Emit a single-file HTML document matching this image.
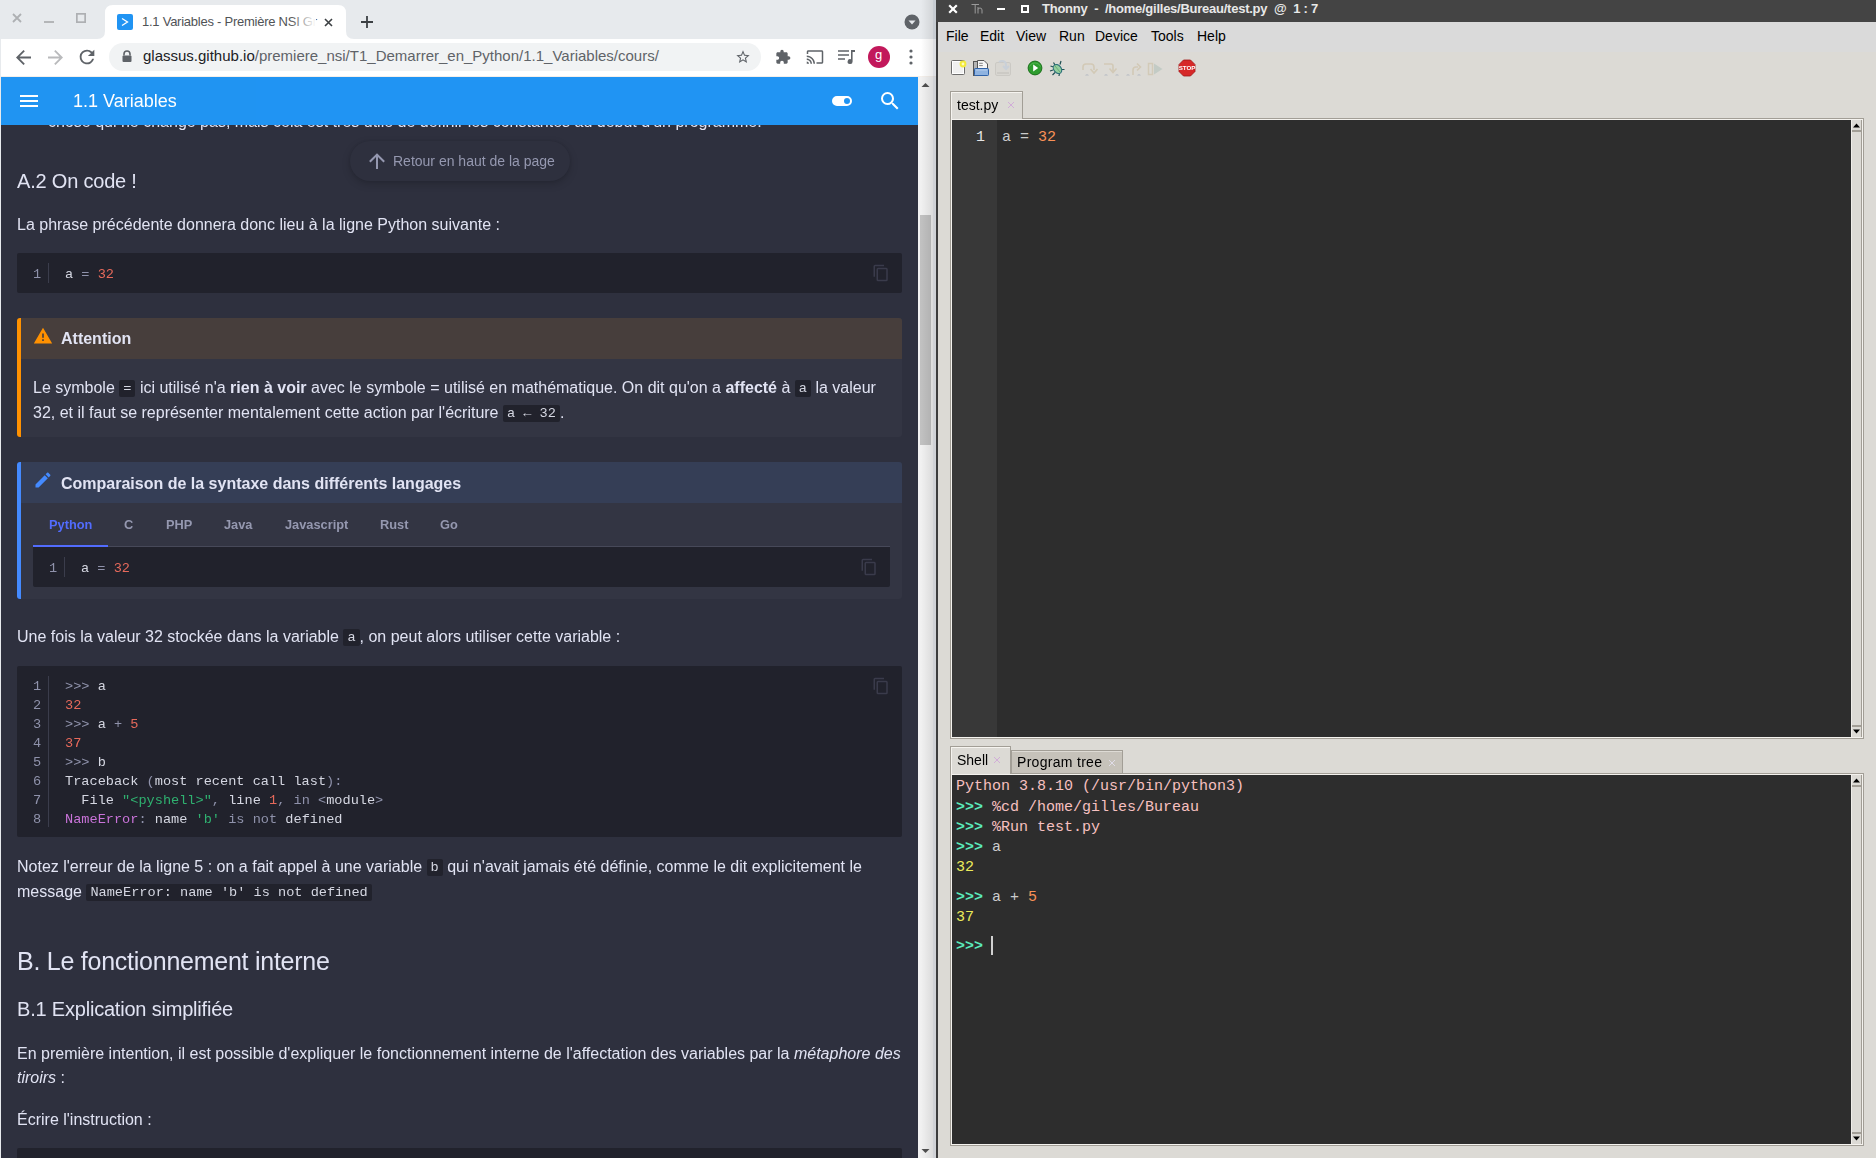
<!DOCTYPE html>
<html><head><meta charset="utf-8"><title>screen</title>
<style>
*{margin:0;padding:0;box-sizing:border-box}
html,body{width:1876px;height:1158px;overflow:hidden;background:#dcdad5;font-family:"Liberation Sans",sans-serif;position:relative}
.a{position:absolute}
.t{position:absolute;line-height:0;white-space:nowrap}
.mono{font-family:"Liberation Mono",monospace}
svg{display:block}
/* chrome */
#chrome{left:0;top:0;width:936px;height:1158px;background:#e7eaed;overflow:hidden}
#web{left:1px;top:77px;width:917px;height:1081px;background:#2e303e;overflow:hidden;will-change:transform;opacity:0.999}
.fg{color:#e1e3f3}
.lt{color:#9598b0}
code,.code{font-family:"Liberation Mono",monospace;font-size:13.6px;background:#21222c;color:#d5d7e2;border-radius:2px;padding:1px 4px;position:relative;top:-1px}
.num{color:#e6695b}.str{color:#2fb170}.fn{color:#c973d9}.op{color:#8f92ab}
/* thonny */
#thonny{left:936px;top:0;width:940px;height:1158px;background:#dcdad5;border-left:2px solid #3c3c3c}
</style></head><body>
<div id="chrome" class="a">
  <!-- window controls -->
  <svg class="a" style="left:12px;top:13px" width="10" height="10" viewBox="0 0 10 10"><path d="M1 1L9 9M9 1L1 9" stroke="#aeb0b3" stroke-width="1.8"/></svg>
  <svg class="a" style="left:44px;top:13px" width="10" height="10" viewBox="0 0 10 10"><path d="M0 9H10" stroke="#aeb0b3" stroke-width="1.8"/></svg>
  <svg class="a" style="left:76px;top:13px" width="10" height="10" viewBox="0 0 10 10"><rect x="0.8" y="0.8" width="8.4" height="8.4" fill="none" stroke="#aeb0b3" stroke-width="1.8"/></svg>
  <!-- active tab -->
  <svg class="a" style="left:97px;top:5px" width="257" height="34" viewBox="0 0 257 34"><path d="M0 34 Q8 34 8 26 V8 Q8 0 16 0 H241 Q249 0 249 8 V26 Q249 34 257 34 Z" fill="#fff"/></svg>
  <div class="a" style="left:117px;top:14px;width:16px;height:16px;background:#2094f3;border-radius:2px"></div>
  <svg class="a" style="left:117px;top:14px" width="16" height="16" viewBox="0 0 16 16"><path d="M5 4.5L10.5 8L5 11.5" fill="none" stroke="#fff" stroke-width="1.3"/></svg>
  <div class="a" style="left:142px;top:12px;width:176px;height:20px;overflow:hidden"><div class="t" style="left:0;top:10px;font-size:13px;color:#505356;letter-spacing:-0.25px">1.1 Variables - Première NSI Gr</div></div>
  <div class="a" style="left:290px;top:12px;width:26px;height:20px;background:linear-gradient(90deg,rgba(255,255,255,0),#fff)"></div>
  <svg class="a" style="left:324px;top:18px" width="9" height="9" viewBox="0 0 9 9"><path d="M1 1L8 8M8 1L1 8" stroke="#3c4043" stroke-width="1.6"/></svg>
  <svg class="a" style="left:361px;top:16px" width="12" height="12" viewBox="0 0 12 12"><path d="M6 0V12M0 6H12" stroke="#3c4043" stroke-width="1.8"/></svg>
  <svg class="a" style="left:904px;top:14px" width="16" height="16" viewBox="0 0 16 16"><circle cx="8" cy="8" r="7.5" fill="#5f6368"/><path d="M4.5 6.5H11.5L8 10.5Z" fill="#e7eaed"/></svg>
  <!-- toolbar -->
  <div class="a" style="left:1px;top:39px;width:935px;height:37px;background:#fff"></div>
  <div class="a" style="left:1px;top:76px;width:935px;height:1px;background:#f4efea"></div>
  <svg class="a" style="left:16px;top:50px" width="15" height="15" viewBox="0 0 16 16"><path d="M16 7H3.83l5.59-5.59L8 0 0 8l8 8 1.41-1.41L3.83 9H16z" fill="#5f6368"/></svg>
  <svg class="a" style="left:48px;top:50px" width="15" height="15" viewBox="0 0 16 16"><path d="M0 7h12.17L6.58 1.41 8 0l8 8-8 8-1.41-1.41L12.17 9H0z" fill="#b9babc"/></svg>
  <svg class="a" style="left:76px;top:46px" width="22" height="22" viewBox="0 0 24 24"><path d="M17.65 6.35A7.958 7.958 0 0 0 12 4a8 8 0 1 0 7.73 10h-2.08A5.99 5.99 0 0 1 12 18a6 6 0 1 1 0-12c1.66 0 3.14.69 4.22 1.78L13 11h7V4l-2.35 2.35z" fill="#5f6368"/></svg>
  <div class="a" style="left:109px;top:43px;width:652px;height:28px;background:#f1f3f4;border-radius:14px"></div>
  <svg class="a" style="left:122px;top:50px" width="10" height="13" viewBox="0 0 10 13"><path d="M2 5.5V4a3 3 0 0 1 6 0v1.5" fill="none" stroke="#5f6368" stroke-width="1.6"/><rect x="0.5" y="5.5" width="9" height="6.5" rx="1" fill="#5f6368"/></svg>
  <div class="t" style="left:143px;top:56px;font-size:15px;color:#202124">glassus.github.io<span style="color:#5f6368">/premiere_nsi/T1_Demarrer_en_Python/1.1_Variables/cours/</span></div>
  <svg class="a" style="left:735px;top:49px" width="16" height="16" viewBox="0 0 24 24"><path d="M22 9.24l-7.19-.62L12 2 9.19 8.63 2 9.24l5.46 4.73L5.82 21 12 17.27 18.18 21l-1.63-7.03L22 9.24zM12 15.4l-3.76 2.27 1-4.28-3.32-2.88 4.38-.38L12 6.1l1.71 4.04 4.38.38-3.32 2.88 1 4.28L12 15.4z" fill="#5f6368"/></svg>
  <svg class="a" style="left:775px;top:49px" width="16" height="16" viewBox="0 0 24 24"><path d="M20.5 11H19V7c0-1.1-.9-2-2-2h-4V3.5C13 2.12 11.88 1 10.5 1S8 2.12 8 3.5V5H4c-1.1 0-1.99.9-1.99 2v3.8H3.5c1.49 0 2.7 1.21 2.7 2.7s-1.21 2.7-2.7 2.7H2V20c0 1.1.9 2 2 2h3.8v-1.5c0-1.49 1.21-2.7 2.7-2.7 1.49 0 2.7 1.21 2.7 2.7V22H17c1.1 0 2-.9 2-2v-4h1.5c1.38 0 2.5-1.12 2.5-2.5S21.88 11 20.5 11z" fill="#5f6368"/></svg>
  <svg class="a" style="left:806px;top:48px" width="18" height="18" viewBox="0 0 24 24"><path d="M21 3H3c-1.1 0-2 .9-2 2v3h2V5h18v14h-7v2h7c1.1 0 2-.9 2-2V5c0-1.1-.9-2-2-2zM1 18v3h3c0-1.66-1.34-3-3-3zm0-4v2c2.76 0 5 2.24 5 5h2c0-3.87-3.13-7-7-7zm0-4v2a9 9 0 0 1 9 9h2c0-6.08-4.93-11-11-11z" fill="#5f6368"/></svg>
  <svg class="a" style="left:838px;top:49px" width="17" height="16" viewBox="0 0 17 16"><path d="M0 2H11M0 6H11M0 10H7" stroke="#5f6368" stroke-width="1.7"/><path d="M13 1H17V3H14.6V12.5A2.5 2.5 0 1 1 13 10.2Z" fill="#5f6368"/></svg>
  <div class="a" style="left:868px;top:46px;width:22px;height:22px;border-radius:50%;background:#c2185b"></div>
  <div class="t" style="left:875px;top:55px;font-size:13px;color:#fff">g</div>
  <svg class="a" style="left:909px;top:49px" width="4" height="16" viewBox="0 0 4 16"><circle cx="2" cy="2" r="1.6" fill="#5f6368"/><circle cx="2" cy="8" r="1.6" fill="#5f6368"/><circle cx="2" cy="14" r="1.6" fill="#5f6368"/></svg>

  <!-- web content -->

  <div id="web" class="a"><div class="a" style="left:-1px;top:-77px;width:1876px;height:1158px">
    <!-- clipped list line -->
    <div class="t fg" style="left:48px;top:122px;font-size:16px">chose qui ne change pas, mais cela est très utile de définir les constantes au début d'un programme.</div>
    <!-- header -->
    <div class="a" style="left:0;top:77px;width:918px;height:48px;background:#2094f3"></div>
    <svg class="a" style="left:17px;top:89px" width="24" height="24" viewBox="0 0 24 24"><path d="M3 6h18v2H3V6m0 5h18v2H3v-2m0 5h18v2H3v-2z" fill="#fff"/></svg>
    <div class="t" style="left:73px;top:101px;font-size:18px;color:#fff">1.1 Variables</div>
    <svg class="a" style="left:830px;top:89px" width="24" height="24" viewBox="0 0 24 24"><path d="M17 7H7a5 5 0 0 0-5 5 5 5 0 0 0 5 5h10a5 5 0 0 0 5-5 5 5 0 0 0-5-5m0 8a3 3 0 0 1-3-3 3 3 0 0 1 3-3 3 3 0 0 1 3 3 3 3 0 0 1-3 3z" fill="#fff"/></svg>
    <svg class="a" style="left:878px;top:89px" width="24" height="24" viewBox="0 0 24 24"><path d="M9.5 3A6.5 6.5 0 0 1 16 9.5c0 1.61-.59 3.090-1.56 4.230l.27.27h.79l5 5-1.5 1.5-5-5v-.79l-.27-.27A6.516 6.516 0 0 1 9.5 16 6.5 6.5 0 0 1 3 9.5 6.5 6.5 0 0 1 9.5 3m0 2C7 5 5 7 5 9.5S7 14 9.5 14 14 12 14 9.5 12 5 9.5 5z" fill="#fff"/></svg>
    <!-- back to top -->
    <div class="a" style="left:350px;top:141px;width:220px;height:40px;border-radius:20px;background:#2e303e;box-shadow:0 3px 8px rgba(0,0,0,0.18),0 0 3px rgba(0,0,0,0.08)"></div>
    <svg class="a" style="left:365px;top:149px" width="24" height="24" viewBox="0 0 24 24"><path d="M13 20h-2V8l-5.5 5.5-1.42-1.42L12 4.16l7.920 7.920-1.42 1.420L13 8v12z" fill="#9598b0"/></svg>
    <div class="t lt" style="left:393px;top:161px;font-size:14px">Retour en haut de la page</div>
    <!-- A.2 -->
    <div class="t fg" style="left:17px;top:181px;font-size:20px;letter-spacing:-0.2px">A.2 On code !</div>
    <div class="t fg" style="left:17px;top:225px;font-size:16px">La phrase précédente donnera donc lieu à la ligne Python suivante :</div>
    <!-- code 1 -->
    <div class="a" style="left:17px;top:253px;width:885px;height:40px;background:#21222c;border-radius:2px"></div>
    <div class="a" style="left:48px;top:263px;width:1px;height:20px;background:#3b3d4c"></div>
    <div class="t mono" style="left:33px;top:275px;font-size:13.6px;color:#8f92ab">1</div>
    <div class="t mono" style="left:65px;top:275px;font-size:13.6px;color:#d5d7e2">a <span class="op">=</span> <span class="num">32</span></div>
    <svg class="a" style="left:872px;top:264px" width="18" height="18" viewBox="0 0 24 24"><path d="M19 21H8V7h11m0-2H8a2 2 0 0 0-2 2v14a2 2 0 0 0 2 2h11a2 2 0 0 0 2-2V7a2 2 0 0 0-2-2m-3-4H4a2 2 0 0 0-2 2v14h2V3h12V1z" fill="#3a3b4b"/></svg>
    <!-- warning admonition -->
    <div class="a" style="left:17px;top:318px;width:885px;height:119px;background:#333543;border-radius:3px;border-left:4px solid #ff9100"></div>
    <div class="a" style="left:21px;top:318px;width:881px;height:41px;background:#473e3c;border-top-right-radius:3px"></div>
    <svg class="a" style="left:33px;top:326px" width="20" height="20" viewBox="0 0 24 24"><path d="M13 14h-2V9h2m0 9h-2v-2h2M1 21h22L12 2 1 21z" fill="#ff9100"/></svg>
    <div class="t fg" style="left:61px;top:339px;font-size:16px;font-weight:bold">Attention</div>
    <div class="t fg" style="left:33px;top:388px;font-size:16px">Le symbole <code>=</code> ici utilisé n'a <b>rien à voir</b> avec le symbole = utilisé en mathématique. On dit qu'on a <b>affecté</b> à <code>a</code> la valeur</div>
    <div class="t fg" style="left:33px;top:413px;font-size:16px">32, et il faut se représenter mentalement cette action par l'écriture <code>a ← 32</code>.</div>
    <!-- note admonition with tabs -->
    <div class="a" style="left:17px;top:462px;width:885px;height:137px;background:#333543;border-radius:3px;border-left:4px solid #448aff"></div>
    <div class="a" style="left:21px;top:462px;width:881px;height:41px;background:#353e56;border-top-right-radius:3px"></div>
    <svg class="a" style="left:33px;top:470px" width="20" height="20" viewBox="0 0 24 24"><path d="M20.71 7.04c.39-.39.39-1.04 0-1.410l-2.34-2.34c-.37-.39-1.02-.39-1.41 0l-1.84 1.830 3.75 3.75M3 17.25V21h3.75L17.81 9.93l-3.75-3.75L3 17.25z" fill="#448aff"/></svg>
    <div class="t fg" style="left:61px;top:484px;font-size:16px;font-weight:bold">Comparaison de la syntaxe dans différents langages</div>
    <div class="a" style="left:33px;top:546px;width:857px;height:1px;background:#474959"></div>
    <div class="a" style="left:33px;top:545px;width:75px;height:2px;background:#526cfe"></div>
    <div class="t" style="left:49px;top:525px;font-size:12.8px;font-weight:bold;color:#526cfe">Python</div>
    <div class="t lt" style="left:124px;top:525px;font-size:12.8px;font-weight:bold">C</div>
    <div class="t lt" style="left:166px;top:525px;font-size:12.8px;font-weight:bold">PHP</div>
    <div class="t lt" style="left:224px;top:525px;font-size:12.8px;font-weight:bold">Java</div>
    <div class="t lt" style="left:285px;top:525px;font-size:12.8px;font-weight:bold">Javascript</div>
    <div class="t lt" style="left:380px;top:525px;font-size:12.8px;font-weight:bold">Rust</div>
    <div class="t lt" style="left:440px;top:525px;font-size:12.8px;font-weight:bold">Go</div>
    <div class="a" style="left:33px;top:547px;width:857px;height:40px;background:#21222c;border-radius:0 0 2px 2px"></div>
    <div class="a" style="left:64px;top:557px;width:1px;height:20px;background:#3b3d4c"></div>
    <div class="t mono" style="left:49px;top:569px;font-size:13.6px;color:#8f92ab">1</div>
    <div class="t mono" style="left:81px;top:569px;font-size:13.6px;color:#d5d7e2">a <span class="op">=</span> <span class="num">32</span></div>
    <svg class="a" style="left:860px;top:558px" width="18" height="18" viewBox="0 0 24 24"><path d="M19 21H8V7h11m0-2H8a2 2 0 0 0-2 2v14a2 2 0 0 0 2 2h11a2 2 0 0 0 2-2V7a2 2 0 0 0-2-2m-3-4H4a2 2 0 0 0-2 2v14h2V3h12V1z" fill="#3a3b4b"/></svg>
    <!-- para -->
    <div class="t fg" style="left:17px;top:637px;font-size:16px">Une fois la valeur 32 stockée dans la variable <code>a</code>, on peut alors utiliser cette variable :</div>
    <!-- code 2 -->
    <div class="a" style="left:17px;top:666px;width:885px;height:171px;background:#21222c;border-radius:2px"></div>
    <div class="a" style="left:48px;top:676px;width:1px;height:151px;background:#3b3d4c"></div>
    <div class="a mono" style="left:33px;top:677px;font-size:13.6px;line-height:19px;color:#8f92ab;white-space:pre">1
2
3
4
5
6
7
8</div>
    <div class="a mono" style="left:65px;top:677px;font-size:13.6px;line-height:19px;color:#d5d7e2;white-space:pre"><span class="op">&gt;&gt;&gt;</span> a
<span class="num">32</span>
<span class="op">&gt;&gt;&gt;</span> a <span class="op">+</span> <span class="num">5</span>
<span class="num">37</span>
<span class="op">&gt;&gt;&gt;</span> b
Traceback <span class="op">(</span>most recent call last<span class="op">):</span>
  File <span class="str">"&lt;pyshell&gt;"</span><span class="op">,</span> line <span class="num">1</span><span class="op">,</span> <span class="op">in</span> <span class="op">&lt;</span>module<span class="op">&gt;</span>
<span class="fn">NameError</span><span class="op">:</span> name <span class="str">'b'</span> <span class="op">is</span> <span class="op">not</span> defined</div>
    <svg class="a" style="left:872px;top:677px" width="18" height="18" viewBox="0 0 24 24"><path d="M19 21H8V7h11m0-2H8a2 2 0 0 0-2 2v14a2 2 0 0 0 2 2h11a2 2 0 0 0 2-2V7a2 2 0 0 0-2-2m-3-4H4a2 2 0 0 0-2 2v14h2V3h12V1z" fill="#3a3b4b"/></svg>
    <!-- notez -->
    <div class="t fg" style="left:17px;top:867px;font-size:16px">Notez l'erreur de la ligne 5 : on a fait appel à une variable <code>b</code> qui n'avait jamais été définie, comme le dit explicitement le</div>
    <div class="t fg" style="left:17px;top:892px;font-size:16px">message <code>NameError: name 'b' is not defined</code></div>
    <div class="t fg" style="left:17px;top:961px;font-size:25px;letter-spacing:-0.25px">B. Le fonctionnement interne</div>
    <div class="t fg" style="left:17px;top:1009px;font-size:20px;letter-spacing:-0.2px">B.1 Explication simplifiée</div>
    <div class="t fg" style="left:17px;top:1054px;font-size:16px">En première intention, il est possible d'expliquer le fonctionnement interne de l'affectation des variables par la <i>métaphore des</i></div>
    <div class="t fg" style="left:17px;top:1078px;font-size:16px"><i>tiroirs</i> :</div>
    <div class="t fg" style="left:17px;top:1120px;font-size:16px">Écrire l'instruction :</div>
    <div class="a" style="left:17px;top:1148px;width:885px;height:40px;background:#21222c;border-radius:2px"></div>
  </div></div>

  <!-- scrollbar -->
  <div class="a" style="left:918px;top:77px;width:18px;height:1081px;background:#f1f1f1"></div>
  <div class="a" style="left:920px;top:215px;width:11px;height:230px;background:#c1c1c1"></div>
  <svg class="a" style="left:921px;top:82px" width="9" height="6" viewBox="0 0 9 6"><path d="M0.5 5L4.5 1L8.5 5Z" fill="#505050"/></svg>
  <svg class="a" style="left:921px;top:1148px" width="9" height="6" viewBox="0 0 9 6"><path d="M0.5 1L4.5 5L8.5 1Z" fill="#505050"/></svg>
  <!-- shadow from thonny -->
  <div class="a" style="left:921px;top:0;width:12px;height:1158px;background:linear-gradient(90deg,rgba(0,0,0,0),rgba(0,0,0,0.09))"></div><div class="a" style="left:933px;top:0;width:3px;height:1158px;background:rgba(20,35,60,0.15)"></div>
</div>

<div id="thonny" class="a"><div class="a" style="left:-938px;top:0;width:1876px;height:1158px">
  <!-- title bar -->
  <div class="a" style="left:936px;top:0;width:940px;height:22px;background:#444"></div>
  <svg class="a" style="left:948px;top:4px" width="10" height="10" viewBox="0 0 10 10"><path d="M1.2 1.2L8.8 8.8M8.8 1.2L1.2 8.8" stroke="#fff" stroke-width="2.2"/></svg>
  <svg class="a" style="left:971px;top:4px" width="12" height="10" viewBox="0 0 12 10"><path d="M0.5 0.5H8M4.2 0.5V9.5M7 3V9.5M7 5.5Q7 4 9 4Q11 4 11 6V9.5" fill="none" stroke="#9a9a9a" stroke-width="1"/></svg>
  <div class="a" style="left:997px;top:8px;width:8px;height:2px;background:#fff"></div>
  <div class="a" style="left:1021px;top:5px;width:8px;height:8px;border:2px solid #fff"></div>
  <div class="t" style="left:1042px;top:9px;font-size:13px;font-weight:bold;color:#e8e8e8;letter-spacing:-0.25px">Thonny&nbsp; - &nbsp;/home/gilles/Bureau/test.py &nbsp;@ &nbsp;1 : 7</div>
  <!-- menu bar -->
  <div class="a" style="left:938px;top:22px;width:938px;height:30px;background:#dadada"></div>
  <div class="t" style="left:946px;top:36px;font-size:14px;color:#000">File</div>
  <div class="t" style="left:980px;top:36px;font-size:14px;color:#000">Edit</div>
  <div class="t" style="left:1016px;top:36px;font-size:14px;color:#000">View</div>
  <div class="t" style="left:1059px;top:36px;font-size:14px;color:#000">Run</div>
  <div class="t" style="left:1095px;top:36px;font-size:14px;color:#000">Device</div>
  <div class="t" style="left:1151px;top:36px;font-size:14px;color:#000">Tools</div>
  <div class="t" style="left:1197px;top:36px;font-size:14px;color:#000">Help</div>
  <!-- toolbar icons -->
  <svg class="a" style="left:950px;top:59px" width="17" height="18" viewBox="0 0 17 18"><rect x="1.5" y="1.5" width="13" height="14" rx="1" fill="#f0f0f0" stroke="#6d6d6d" stroke-width="1"/><rect x="2.5" y="2.5" width="11" height="12" fill="none" stroke="#fff" stroke-width="1"/><circle cx="13" cy="5" r="3.4" fill="#f3ea3a"/><circle cx="13" cy="5" r="1.4" fill="#fffbc0"/></svg>
  <svg class="a" style="left:972px;top:59px" width="18" height="18" viewBox="0 0 18 18"><rect x="1.5" y="2.5" width="4" height="14" fill="#b4b4b4" stroke="#555" stroke-width="1"/><path d="M5.5 1.5H12L15.5 5V10H5.5Z" fill="#f6f6f6" stroke="#555" stroke-width="1"/><path d="M7.2 4.3H10.8M7.2 6.6H10.8" stroke="#777" stroke-width="0.9"/><rect x="2.5" y="9.5" width="14" height="7" rx="0.8" fill="#8fb3e0" stroke="#2f62a8" stroke-width="1"/><path d="M4 11H15" stroke="#c0d6f0" stroke-width="0.8"/></svg>
  <svg class="a" style="left:994px;top:59px" width="18" height="18" viewBox="0 0 18 18"><rect x="1.5" y="3.5" width="15" height="13" rx="1.5" fill="#d8d6d1" stroke="#cbc9c4" stroke-width="1"/><path d="M5 3C8 1 12 2 12 6V9M9 7L12 10L15 7" fill="none" stroke="#c9d0d8" stroke-width="2"/><path d="M3 14H15" stroke="#c8c6c1" stroke-width="1.5"/></svg>
  <svg class="a" style="left:1027px;top:60px" width="16" height="16" viewBox="0 0 16 16"><circle cx="8" cy="8" r="6.9" fill="#2e9c2e" stroke="#1a6e1a" stroke-width="1"/><path d="M2.5 6.5A6 6 0 0 1 13.5 6.5" fill="none" stroke="#5fc45f" stroke-width="1" opacity="0.6"/><path d="M6.2 4.6L11.2 8L6.2 11.4Z" fill="#fff"/></svg>
  <svg class="a" style="left:1049px;top:60px" width="17" height="17" viewBox="0 0 17 17"><g stroke="#1f4f52" stroke-width="1.2" fill="none"><path d="M4.5 2.5L6 5M1.5 6L4.5 7M1 11L4 10M3.5 15L6 12.5M10 16L10.5 13M15.5 9.5L13 9.5M12 1L11 4.5"/></g><ellipse cx="8.5" cy="9" rx="3.6" ry="5" transform="rotate(-40 8.5 9)" fill="#93cf9e" stroke="#2b6f78" stroke-width="1.1"/><path d="M6 6L11 12" stroke="#5e9f6e" stroke-width="0.8"/></svg>
  <svg class="a" style="left:1081px;top:62px" width="17" height="14" viewBox="0 0 17 14"><path d="M2 8V5Q2 2 5 2H10Q13 2 13 5V8" fill="none" stroke="#d2c9b6" stroke-width="1.6"/><path d="M9.5 7L13 11L16.5 7" fill="none" stroke="#d2c9b6" stroke-width="1.6"/><path d="M4 13.5Q6 11 8 13.5" fill="#b8bcc4"/></svg>
  <svg class="a" style="left:1103px;top:62px" width="17" height="14" viewBox="0 0 17 14"><path d="M1 2H8Q10 2 10 4V9" fill="none" stroke="#d2c9b6" stroke-width="1.6"/><path d="M6.5 6.5L10 10.5L13.5 6.5" fill="none" stroke="#d2c9b6" stroke-width="1.6"/><path d="M1 13.5Q3 11 5 13.5M12 13.5Q14 11 16 13.5" fill="#b8bcc4"/></svg>
  <svg class="a" style="left:1125px;top:62px" width="17" height="14" viewBox="0 0 17 14"><path d="M8 13V8Q8 5 11 5H13" fill="none" stroke="#d2c9b6" stroke-width="1.6"/><path d="M12 1.5L15.5 5L12 8.5" fill="none" stroke="#d2c9b6" stroke-width="1.6"/><path d="M1 13.5Q3 11 5 13.5M12 13.5Q14 11 16 13.5" fill="#b8bcc4"/></svg>
  <svg class="a" style="left:1147px;top:62px" width="17" height="14" viewBox="0 0 17 14"><rect x="1.5" y="1.5" width="4" height="11" fill="none" stroke="#d2cab8" stroke-width="1.5"/><path d="M7 1.5L15.5 7L7 12.5Z" fill="#c3cbc5"/></svg>
  <svg class="a" style="left:1178px;top:59px" width="18" height="18" viewBox="0 0 18 18"><path d="M5.5 1H12.5L17 5.5V12.5L12.5 17H5.5L1 12.5V5.5Z" fill="#d62828" stroke="#a01818" stroke-width="0.8"/><text x="9" y="11.3" font-family="Liberation Sans" font-size="6.2" font-weight="bold" fill="#fff" text-anchor="middle">STOP</text></svg>
  <!-- editor tab -->
  <div class="a" style="left:950px;top:91px;width:73px;height:29px;background:#dcdad5;border:1px solid #a29e96;border-bottom:none"></div>
  <div class="a" style="left:951px;top:92px;width:71px;height:1px;background:#f6f4f0"></div>
  <div class="a" style="left:951px;top:92px;width:1px;height:27px;background:#f6f4f0"></div>
  <div class="t" style="left:957px;top:105px;font-size:14px;color:#000">test.py</div>
  <svg class="a" style="left:1007px;top:101px" width="8" height="8" viewBox="0 0 8 8"><path d="M1 1L7 7M7 1L1 7" stroke="#cfa8d8" stroke-width="0.9"/></svg>
  <!-- editor frame -->
  <div class="a" style="left:1022px;top:118px;width:842px;height:1px;background:#a29e96"></div>
  <div class="a" style="left:950px;top:118px;width:914px;height:621px;border:1px solid #a29e96;border-top:none"></div>
  <div class="a" style="left:951px;top:119px;width:912px;height:619px;border:1px solid #f4f2ee"></div>
  <div class="a" style="left:952px;top:120px;width:899px;height:617px;background:#2d2d2d"></div>
  <div class="a" style="left:952px;top:120px;width:45px;height:617px;background:#383838"></div>
  <div class="t mono" style="left:976px;top:138px;font-size:15px;color:#e6e6e6">1</div>
  <div class="t mono" style="left:1002px;top:138px;font-size:15px;color:#cccccc">a = <span style="color:#f99157">32</span></div>
  <!-- editor scrollbar -->
  <div class="a" style="left:1851px;top:120px;width:11px;height:617px;background:#dcdad5;border-left:1px solid #efede9;border-right:1px solid #a29e96"></div>
  <div class="a" style="left:1852px;top:130px;width:9px;height:2px;background:#a29e96"></div>
  <div class="a" style="left:1852px;top:725px;width:9px;height:2px;background:#a29e96"></div>
  <svg class="a" style="left:1853px;top:123px" width="7" height="5" viewBox="0 0 7 5"><path d="M0 4.5L3.5 0.5L7 4.5Z" fill="#000"/></svg>
  <svg class="a" style="left:1853px;top:729px" width="7" height="5" viewBox="0 0 7 5"><path d="M0 0.5L3.5 4.5L7 0.5Z" fill="#000"/></svg>
  <!-- shell tabs -->
  <div class="a" style="left:1011px;top:750px;width:112px;height:25px;background:#c6c2ba;border:1px solid #a29e96;border-bottom:none"></div>
  <div class="a" style="left:1012px;top:751px;width:110px;height:1px;background:#dedbd5"></div>
  <div class="t" style="left:1017px;top:762px;font-size:14px;color:#000;letter-spacing:0.3px">Program tree</div>
  <svg class="a" style="left:1108px;top:759px" width="8" height="8" viewBox="0 0 8 8"><path d="M1 1L7 7M7 1L1 7" stroke="#e0dce8" stroke-width="1"/></svg>
  <div class="a" style="left:950px;top:746px;width:61px;height:29px;background:#dcdad5;border:1px solid #a29e96;border-bottom:none"></div>
  <div class="a" style="left:951px;top:747px;width:59px;height:1px;background:#f6f4f0"></div>
  <div class="a" style="left:951px;top:747px;width:1px;height:27px;background:#f6f4f0"></div>
  <div class="t" style="left:957px;top:760px;font-size:14px;color:#000">Shell</div>
  <svg class="a" style="left:993px;top:756px" width="8" height="8" viewBox="0 0 8 8"><path d="M1 1L7 7M7 1L1 7" stroke="#cfa8d8" stroke-width="0.9"/></svg>
  <!-- shell frame -->
  <div class="a" style="left:1123px;top:773px;width:741px;height:1px;background:#a29e96"></div>
  <div class="a" style="left:1011px;top:773px;width:112px;height:1px;background:#a29e96"></div>
  <div class="a" style="left:950px;top:773px;width:914px;height:373px;border:1px solid #a29e96;border-top:none"></div>
  <div class="a" style="left:951px;top:774px;width:912px;height:371px;border:1px solid #f4f2ee"></div>
  <div class="a" style="left:952px;top:775px;width:899px;height:369px;background:#2d2d2d"></div>
  <div class="a mono" style="left:956px;top:0;font-size:15px;white-space:nowrap">
    <div class="t" style="left:0;top:787px;color:#f7c0c0">Python 3.8.10 (/usr/bin/python3)</div>
    <div class="t" style="left:0;top:808px"><b style="color:#5bebbb">&gt;&gt;&gt;</b> <span style="color:#f7c0c0">%cd /home/gilles/Bureau</span></div>
    <div class="t" style="left:0;top:828px"><b style="color:#5bebbb">&gt;&gt;&gt;</b> <span style="color:#f7c0c0">%Run test.py</span></div>
    <div class="t" style="left:0;top:848px"><b style="color:#5bebbb">&gt;&gt;&gt;</b> <span style="color:#cccccc">a</span></div>
    <div class="t" style="left:0;top:868px;color:#ebeb5b">32</div>
    <div class="t" style="left:0;top:898px"><b style="color:#5bebbb">&gt;&gt;&gt;</b> <span style="color:#cccccc">a + </span><span style="color:#f99157">5</span></div>
    <div class="t" style="left:0;top:918px;color:#ebeb5b">37</div>
    <div class="t" style="left:0;top:947px"><b style="color:#5bebbb">&gt;&gt;&gt;</b></div>
  </div>
  <div class="a" style="left:991px;top:936px;width:2px;height:19px;background:#d0d0d0"></div>
  <!-- shell scrollbar -->
  <div class="a" style="left:1851px;top:775px;width:11px;height:369px;background:#dcdad5;border-left:1px solid #efede9;border-right:1px solid #a29e96"></div>
  <div class="a" style="left:1852px;top:785px;width:9px;height:2px;background:#a29e96"></div>
  <div class="a" style="left:1852px;top:1132px;width:9px;height:2px;background:#a29e96"></div>
  <svg class="a" style="left:1853px;top:778px" width="7" height="5" viewBox="0 0 7 5"><path d="M0 4.5L3.5 0.5L7 4.5Z" fill="#000"/></svg>
  <svg class="a" style="left:1853px;top:1136px" width="7" height="5" viewBox="0 0 7 5"><path d="M0 0.5L3.5 4.5L7 0.5Z" fill="#000"/></svg>
</div></div>
</body></html>
